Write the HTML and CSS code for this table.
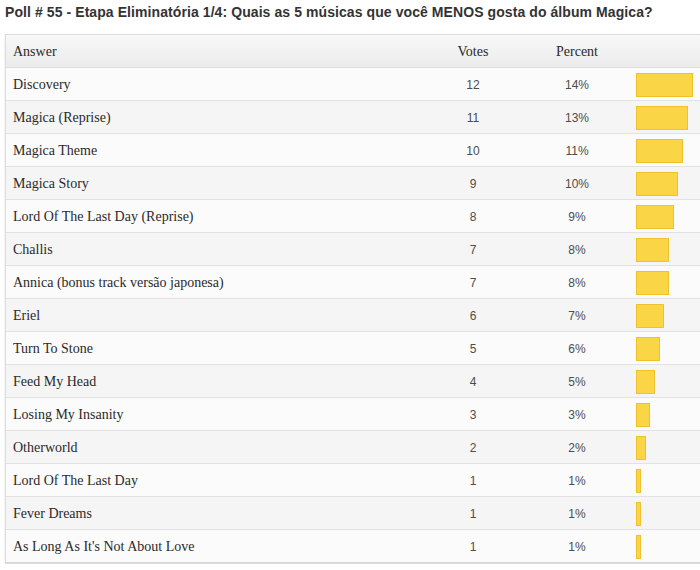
FILE: index.html
```html
<!DOCTYPE html>
<html>
<head>
<meta charset="utf-8">
<link rel="stylesheet" href="styles.css">
</head>
<body>
<h1 class="title">Poll # 55 - Etapa Eliminatória 1/4: Quais as 5 músicas que você MENOS gosta do álbum Magica?</h1>
<div class="poll">
  <div class="row head">
    <div class="answer">Answer</div>
    <div class="votes">Votes</div>
    <div class="pct">Percent</div>
    <div class="barcell"></div>
  </div>
  <div class="row odd"><div class="answer">Discovery</div><div class="votes num">12</div><div class="pct num">14%</div><div class="barcell"><span class="bar" style="width:57px"></span></div></div>
  <div class="row even"><div class="answer">Magica (Reprise)</div><div class="votes num">11</div><div class="pct num">13%</div><div class="barcell"><span class="bar" style="width:52px"></span></div></div>
  <div class="row odd"><div class="answer">Magica Theme</div><div class="votes num">10</div><div class="pct num">11%</div><div class="barcell"><span class="bar" style="width:47px"></span></div></div>
  <div class="row even"><div class="answer">Magica Story</div><div class="votes num">9</div><div class="pct num">10%</div><div class="barcell"><span class="bar" style="width:42px"></span></div></div>
  <div class="row odd"><div class="answer">Lord Of The Last Day (Reprise)</div><div class="votes num">8</div><div class="pct num">9%</div><div class="barcell"><span class="bar" style="width:38px"></span></div></div>
  <div class="row even"><div class="answer">Challis</div><div class="votes num">7</div><div class="pct num">8%</div><div class="barcell"><span class="bar" style="width:33px"></span></div></div>
  <div class="row odd"><div class="answer">Annica (bonus track versão japonesa)</div><div class="votes num">7</div><div class="pct num">8%</div><div class="barcell"><span class="bar" style="width:33px"></span></div></div>
  <div class="row even"><div class="answer">Eriel</div><div class="votes num">6</div><div class="pct num">7%</div><div class="barcell"><span class="bar" style="width:28px"></span></div></div>
  <div class="row odd"><div class="answer">Turn To Stone</div><div class="votes num">5</div><div class="pct num">6%</div><div class="barcell"><span class="bar" style="width:24px"></span></div></div>
  <div class="row even"><div class="answer">Feed My Head</div><div class="votes num">4</div><div class="pct num">5%</div><div class="barcell"><span class="bar" style="width:19px"></span></div></div>
  <div class="row odd"><div class="answer">Losing My Insanity</div><div class="votes num">3</div><div class="pct num">3%</div><div class="barcell"><span class="bar" style="width:14px"></span></div></div>
  <div class="row even"><div class="answer">Otherworld</div><div class="votes num">2</div><div class="pct num">2%</div><div class="barcell"><span class="bar" style="width:10px"></span></div></div>
  <div class="row odd"><div class="answer">Lord Of The Last Day</div><div class="votes num">1</div><div class="pct num">1%</div><div class="barcell"><span class="bar" style="width:5px"></span></div></div>
  <div class="row even"><div class="answer">Fever Dreams</div><div class="votes num">1</div><div class="pct num">1%</div><div class="barcell"><span class="bar" style="width:5px"></span></div></div>
  <div class="row odd"><div class="answer">As Long As It's Not About Love</div><div class="votes num">1</div><div class="pct num">1%</div><div class="barcell"><span class="bar" style="width:5px"></span></div></div>
</div>
</body>
</html>
```
FILE: styles.css
```css
html, body {
  margin: 0;
  padding: 0;
  background: #ffffff;
  overflow: hidden;
}
body {
  padding: 4px 0 0 5px;
}
.title {
  margin: 0;
  font-family: "Liberation Sans", Arial, sans-serif;
  font-size: 14px;
  line-height: 16px;
  font-weight: bold;
  letter-spacing: 0.08px;
  color: #333333;
}
.poll {
  margin-top: 14px;
  width: 695px;
  border: 1px solid #dcdcdc;
  border-right: none;
  box-shadow: 0 1px 2px rgba(0,0,0,0.12);
}
.row {
  display: grid;
  grid-template-columns: 414px 106px 102px 1fr;
  height: 32px;
  border-bottom: 1px solid #e2e2e2;
  align-items: center;
}
.row:last-child {
  border-bottom: 1px solid #d6d6d6;
}
.head {
  background: linear-gradient(#f8f8f8, #ebebeb);
  border-bottom: 1px solid #dedede;
}
.odd { background: #fbfbfb; }
.even { background: #f5f5f5; }
.answer {
  padding-left: 7px;
  padding-top: 2px;
  font-family: "Liberation Serif", "Times New Roman", serif;
  font-size: 14px;
  color: #2a2a2a;
}
.head .votes, .head .pct {
  font-family: "Liberation Serif", "Times New Roman", serif;
  font-size: 14px;
  color: #2a2a2a;
  text-align: center;
  padding-top: 2px;
}
.votes, .pct {
  text-align: center;
}
.num {
  font-family: "Liberation Sans", Arial, sans-serif;
  font-size: 12px;
  color: #4d4d4d;
  padding-top: 1px;
}
.barcell {
  padding-left: 8px;
  height: 32px;
  box-sizing: border-box;
  padding-top: 5px;
}
.bar {
  display: block;
  height: 24px;
  box-sizing: border-box;
  background: #fad545;
  border: 1px solid #f0c12a;
}
```
